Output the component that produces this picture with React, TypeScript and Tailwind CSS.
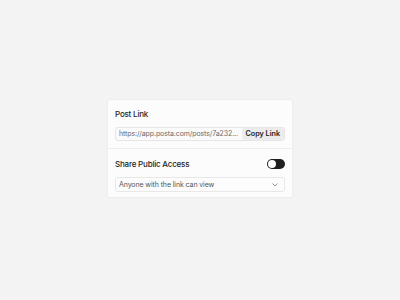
const font = { fontFamily: 'Inter, "Liberation Sans", sans-serif' }

const App = () => (
  <div className="w-[400px] h-[300px] bg-[#f3f3f3] flex items-start justify-center pt-[100px]" style={font}>
    <div className="w-[184px] bg-[#fcfcfc] rounded-[2px] shadow-[0_0_0_1px_rgba(0,0,0,0.02)]">
      <div className="px-[7px] pt-[8px] pb-[7px] flex flex-col gap-[7px]">
        <div className="h-[12px] leading-[12px] text-[8px] tracking-[-0.2px] font-medium text-[#1c1c1c]">Post Link</div>
        <div className="h-[14px] flex items-center border border-[#e6e6e6] rounded-[3px] bg-[#fafafa] overflow-hidden">
          <span className="flex-1 min-w-0 pl-[3px] text-[7px] tracking-[-0.1px] text-[#6b6b6b] leading-[12px] whitespace-nowrap overflow-hidden">
            https://app.posta.com/posts/7a232...
          </span>
          <span className="shrink-0 h-full px-[4px] flex items-center bg-[#ececec] rounded-[3px] text-[7.2px] font-semibold text-[#1c1c1c] whitespace-nowrap">
            Copy Link
          </span>
        </div>
      </div>
      <div className="h-px bg-[#ededed]" />
      <div className="px-[7px] pt-[9px] pb-[5px] flex flex-col gap-[7px]">
        <div className="h-[12px] flex items-center justify-between">
          <span className="text-[8px] tracking-[-0.2px] leading-[12px] font-medium text-[#1c1c1c]">Share Public Access</span>
          <span className="w-[18px] h-[10px] rounded-full bg-[#1f1f1f] flex items-center p-[1px]">
            <span className="w-[8px] h-[8px] rounded-full bg-white" />
          </span>
        </div>
        <div className="h-[15px] flex items-center justify-between border border-[#e8e8e8] rounded-[3px] bg-[#fcfcfc] px-[3px]">
          <span className="text-[7px] tracking-[-0.1px] text-[#555] leading-[12px]">Anyone with the link can view</span>
          <svg width="6" height="4" viewBox="0 0 6 4" className="mr-[3px]">
            <path d="M0.5 0.5 L3 3 L5.5 0.5" fill="none" stroke="#888" strokeWidth="0.9" />
          </svg>
        </div>
      </div>
    </div>
  </div>
)

export default App
